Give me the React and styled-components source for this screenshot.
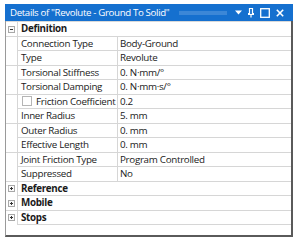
import React from "react";
import styled, { createGlobalStyle } from "styled-components";

const Global = createGlobalStyle`
  html, body { margin: 0; padding: 0; background: #ffffff; }
  body { font-family: "Open Sans", "Noto Sans", sans-serif; }
`;

const Page = styled.div`
  padding: 4px 7px 5px 5px;
  width: 300px;
  height: 242px;
  box-sizing: border-box;
`;

const Panel = styled.div`
  display: flex;
  flex-direction: column;
  height: 100%;
  border-left: 1px solid #9a9a9a;
  border-right: 2px solid #5a5a5a;
  border-bottom: 2px solid #5a5a5a;
  box-sizing: border-box;
  background: #fff;
`;

const TitleBar = styled.div`
  display: flex;
  align-items: center;
  height: 17px;
  background: #1570cf;
  color: #fff;
  font-size: 9.7px;
  letter-spacing: -0.35px;
  padding: 0 9px 0 5px;
  gap: 6px;
  margin-left: -1px;
  margin-right: -2px;
`;

const TitleText = styled.span`
  white-space: nowrap;
`;

const Grip = styled.span`
  flex: 1;
  height: 4px;
  margin: 0 2px 0 4px;
  background-image: radial-gradient(circle, rgba(255,255,255,0.35) 0.6px, transparent 0.8px);
  background-size: 2px 2px;
`;

const Icons = styled.div`
  display: flex;
  align-items: center;
  gap: 6px;
`;

const Table = styled.div`
  display: flex;
  flex-direction: column;
  border-top: 1px solid #d9d9d9;
`;

const Row = styled.div`
  display: grid;
  grid-template-columns: 11px 101px 1fr;
  height: 14.5px;
  border-bottom: 1px solid #d6d6d6;
  box-sizing: border-box;
  font-size: 9.8px;
  letter-spacing: -0.3px;
  color: #1a1a1a;
  align-items: center;
`;

const Gutter = styled.div`
  height: 100%;
  display: flex;
  align-items: center;
  justify-content: center;
  background: #fff;
  margin-bottom: -1px;
`;

const Expander = styled.span`
  width: 7px;
  height: 7px;
  border: 1px solid #a8a8a8;
  box-sizing: border-box;
  position: relative;
  background: #fafafa;
  &::before {
    content: "";
    position: absolute;
    left: 1px;
    right: 1px;
    top: 2px;
    height: 1px;
    background: #333;
  }
  &::after {
    content: "";
    position: absolute;
    top: 1px;
    bottom: 1px;
    left: 2px;
    width: 1px;
    background: #333;
    display: ${(p) => (p.$open ? "none" : "block")};
  }
`;

const Category = styled.div`
  grid-column: 2 / 4;
  font-weight: 700;
  padding-left: 3px;
  border-left: 1px solid #d6d6d6;
  height: 100%;
  display: flex;
  align-items: center;
`;

const NameCell = styled.div`
  height: 100%;
  display: flex;
  align-items: center;
  gap: 4px;
  padding-left: ${(p) => (p.$check ? "4px" : "3px")};
  border-left: 1px solid #d6d6d6;
  border-right: 1px solid #d6d6d6;
  white-space: nowrap;
  overflow: hidden;
`;

const ValueCell = styled.div`
  padding-left: 2px;
  white-space: nowrap;
  overflow: hidden;
`;

const Check = styled.span`
  flex: 0 0 auto;
  width: 10px;
  height: 10px;
  border: 1px solid #b5b5b5;
  box-sizing: border-box;
  background: #fff;
`;

const props = [
  ["Connection Type", "Body-Ground"],
  ["Type", "Revolute"],
  ["Torsional Stiffness", "0. N·mm/°"],
  ["Torsional Damping", "0. N·mm·s/°"],
  ["Friction Coefficient", "0.2", true],
  ["Inner Radius", "5. mm"],
  ["Outer Radius", "0. mm"],
  ["Effective Length", "0. mm"],
  ["Joint Friction Type", "Program Controlled"],
  ["Suppressed", "No"],
];

const CategoryRow = ({ label, open }) => (
  <Row>
    <Gutter>
      <Expander $open={open} />
    </Gutter>
    <Category>{label}</Category>
  </Row>
);

export default function App() {
  return (
    <>
      <Global />
      <Page>
        <Panel>
          <TitleBar>
            <TitleText>Details of "Revolute - Ground To Solid"</TitleText>
            <Grip />
            <Icons>
              <svg width="7" height="5" viewBox="0 0 7 5">
                <path d="M0 0.5 H7 L3.5 4.5 Z" fill="#fff" />
              </svg>
              <svg width="6" height="10" viewBox="0 0 6 10">
                <path d="M1.5 0.5 H4.5 V5.5 H5.5 V6.5 H0.5 V5.5 H1.5 Z M3 6.5 V9.5" fill="none" stroke="#fff" strokeWidth="1.2" />
              </svg>
              <svg width="10" height="10" viewBox="0 0 10 10">
                <rect x="0.7" y="0.7" width="8.6" height="8.6" fill="none" stroke="#fff" strokeWidth="1.3" />
              </svg>
              <svg width="8" height="8" viewBox="0 0 8 8">
                <path d="M0.8 0.8 L7.2 7.2 M7.2 0.8 L0.8 7.2" stroke="#fff" strokeWidth="1.6" />
              </svg>
            </Icons>
          </TitleBar>
          <Table>
            <CategoryRow label="Definition" open />
            {props.map(([name, value, check]) => (
              <Row key={name}>
                <Gutter />
                <NameCell $check={check}>
                  {check && <Check />}
                  {name}
                </NameCell>
                <ValueCell>{value}</ValueCell>
              </Row>
            ))}
            <CategoryRow label="Reference" />
            <CategoryRow label="Mobile" />
            <CategoryRow label="Stops" />
          </Table>
        </Panel>
      </Page>
    </>
  );
}
